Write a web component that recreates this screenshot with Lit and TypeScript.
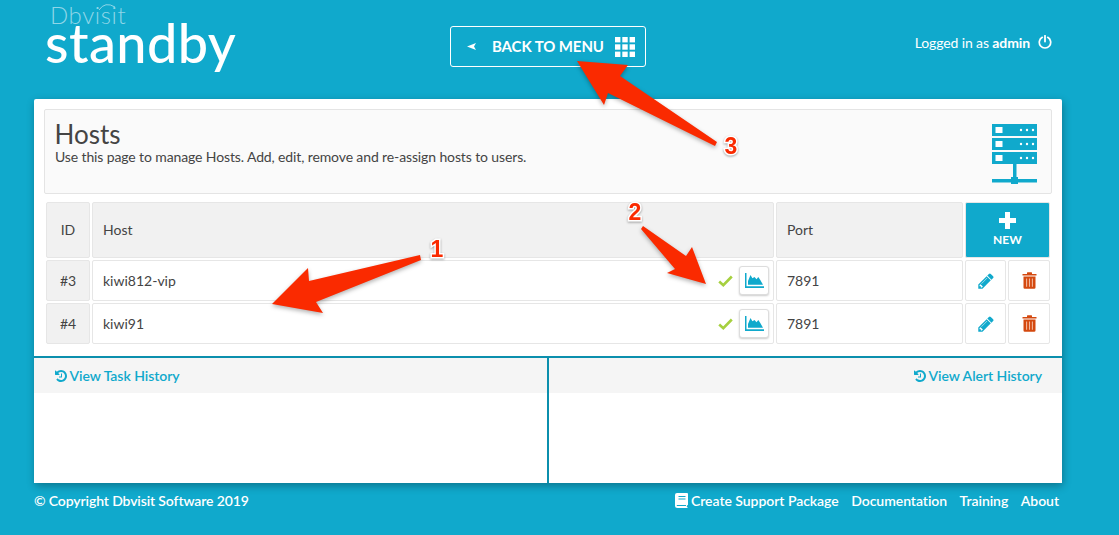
import { LitElement, html, css, svg } from "lit";
import { customElement } from "lit/decorators.js";

const historyIcon = html`<svg class="hist" viewBox="0 0 1792 1792"><path fill="currentColor" d="M1664 896q0 156-61 298t-164 245-245 164-298 61q-172 0-327-72.5t-264-204.5q-7-10-6.5-22.500t8.500-20.500l137-138q10-9 25-9 16 2 23 12 73 95 179 147t225 52q104 0 198.500-40.500t163.500-109.500 109.500-163.500 40.500-198.500-40.500-198.500-109.500-163.500-163.500-109.500-198.500-40.500q-98 0-188 35.500t-160 101.500l137 138q31 30 14 69-17 40-59 40h-448q-26 0-45-19t-19-45v-448q0-42 40-59 39-17 69 14l130 129q107-101 244.500-156.500t284.500-55.500q156 0 298 61t245 164 164 245 61 298zm-640-288v448q0 14-9 23t-23 9h-320q-14 0-23-9t-9-23v-64q0-14 9-23t23-9h224v-352q0-14 9-23t23-9h64q14 0 23 9t9 23z"/></svg>`;

const check = html`<svg class="check" viewBox="0 0 15 12"><path d="M1.200 6.500 5.300 10.200 13.800 1.500" fill="none" stroke="#a6d03f" stroke-width="2.600"/></svg>`;

const chart = html`<svg class="chart" viewBox="0 0 19 15"><path fill="#10a9cc" d="M0 0h1.500v13.300H19V15H0z"/><path fill="#10a9cc" d="M3 11.800V8L5.500 2 7.400 5.300 9.500 4 11.500 6.200 13.300 4 15.300 7 18 11.800z"/></svg>`;

const pencil = html`<svg class="pencil" viewBox="0 0 1792 1792"><path fill="#10a9cc" d="M491 1536l91-91-235-235-91 91v107h128v128h107zm523-928q0-22-22-22-10 0-17 7l-542 542q-7 7-7 17 0 22 22 22 10 0 17-7l542-542q7-7 7-17zm-54-192l416 416-832 832h-416v-416zm683 96q0 53-37 90l-166 166-416-416 166-165q36-38 90-38 53 0 91 38l235 234q37 39 37 91z"/></svg>`;

const trash = html`<svg class="trash" viewBox="0 0 15 17"><path fill="#d4490f" d="M0.500 2H5V.8Q5 .2 5.600 .2H9.400Q10 .2 10 .8V2H14.500V3.600H.500zM1.500 4.600H13.500V15.500Q13.500 16.800 12.200 16.800H2.800Q1.500 16.800 1.500 15.500z"/><path stroke="#f3b79c" stroke-width="1.100" d="M4.600 6.500V14.800M7.500 6.500V14.800M10.400 6.500V14.800"/></svg>`;

const serverIcon = html`<svg class="server" viewBox="0 0 45 60"><g fill="#10a9cc"><rect x="0" y="0" width="45" height="12"/><rect x="0" y="14" width="45" height="12"/><rect x="0" y="28" width="45" height="12"/><rect x="21" y="40" width="3.500" height="13"/><rect x="0" y="55" width="45" height="3.500"/><rect x="19" y="53" width="7" height="7"/></g><g fill="#fff"><rect x="3.500" y="3" width="7" height="6"/><rect x="3.500" y="17" width="7" height="6"/><rect x="3.500" y="31" width="7" height="6"/>${[5.5, 19.5, 33.5].map(y => [29, 35, 41].map(x => svg`<circle cx=${x} cy=${y + 0.5} r="1.200"/>`))}</g></svg>`;

const gridIcon = html`<svg class="grid-ico" viewBox="0 0 20 20" fill="#fff">${[0, 7.3, 14.6].map(y => [0, 7.3, 14.6].map(x => svg`<rect x=${x} y=${y} width="5.400" height="5.400"/>`))}</svg>`;

const power = html`<svg class="power" viewBox="0 0 14 14"><path d="M4.300 2.300A5.700 5.700 0 1 0 9.700 2.300" fill="none" stroke="#fff" stroke-width="1.700" stroke-linecap="round"/><path d="M7 .8V6.500" stroke="#fff" stroke-width="1.800" stroke-linecap="round"/></svg>`;

const book = html`<svg class="book" viewBox="0 0 13 15"><path fill="#fff" d="M2 0H12Q13 0 13 1V11.500Q13 12 12.400 12.300 11.700 12.700 11.700 13.200T12.500 14V15H2.500Q0 15 0 12.500V2Q0 0 2 0z"/><path stroke="#10a9cc" stroke-width="1" d="M3.500 3.500H10.500M3.500 6H10.500M1.800 12.500H11"/></svg>`;

@customElement("host-table")
class HostTable extends LitElement {
  static styles = css`
    :host { display: block; margin: 8px 12px 0; }
    .table { display: grid; grid-template-columns: 44px 682px 187px 41px 42px; grid-template-rows: 56px 41px 41px; gap: 2px; }
    .cell { box-sizing: border-box; border: 1px solid #e6e6e6; border-radius: 2px; display: flex; align-items: center; padding: 0 10px; font-size: 14px; color: #444; background: #fff; }
    .grey { background: #f1f1f1; }
    .head { padding-bottom: 2px; }
    .center { justify-content: center; padding-left: 0; padding-right: 0; }
    .new { grid-column: 4 / 6; background: #10a9cc; color: #fff; flex-direction: column; justify-content: center; font-weight: 700; font-size: 12px; padding: 0 0 2px; }
    .plus { position: relative; width: 17px; height: 17px; margin-bottom: 3px; }
    .plus-h { display: block; width: 17px; height: 5px; background: #fff; margin: 6px 0; }
    .plus-v { display: block; position: absolute; left: 6px; top: 0; width: 5px; height: 17px; background: #fff; }
    .host { justify-content: space-between; padding-right: 4px; }
    .status { display: flex; align-items: center; gap: 6px; }
    .check { width: 15px; height: 12px; display: block; }
    .btn { box-sizing: border-box; width: 30px; height: 29px; border: 1px solid #ddd; border-radius: 3px; display: flex; align-items: center; justify-content: center; box-shadow: 0 1px 2px rgba(0,0,0,.2); background: #fff; }
    .chart { width: 19px; height: 15px; display: block; }
    .pencil { width: 18px; height: 18px; display: block; }
    .trash { width: 15px; height: 17px; display: block; }
  `;
  row(id: string, host: string) {
    return html`
      <div class="cell grey center">${id}</div>
      <div class="cell host"><span>${host}</span><span class="status">${check}<span class="btn">${chart}</span></span></div>
      <div class="cell">7891</div>
      <div class="cell center">${pencil}</div>
      <div class="cell center">${trash}</div>`;
  }
  render() {
    return html`<div class="table">
      <div class="cell grey center head">ID</div>
      <div class="cell grey head">Host</div>
      <div class="cell grey head">Port</div>
      <div class="cell new"><span class="plus"><i class="plus-h"></i><i class="plus-v"></i></span>NEW</div>
      ${this.row("#3", "kiwi812-vip")}
      ${this.row("#4", "kiwi91")}
    </div>`;
  }
}

@customElement("app-root")
class AppRoot extends LitElement {
  static styles = css`
    :host { display: block; position: relative; width: 1119px; height: 535px; overflow: hidden; background: #10a9cc; font-family: Lato, "Open Sans", sans-serif; color: #fff; }
    .header { height: 99px; display: grid; grid-template-columns: 450px 196px 1fr; box-sizing: border-box; }
    .logo { position: relative; padding: 0 0 0 45px; display: flex; flex-direction: column; }
    .dbv { font-size: 24px; line-height: 20px; margin: 5px 0 0 5px; color: #8fd6e8; font-weight: 300; letter-spacing: .6px; }
    .standby { font-size: 54px; line-height: 46px; color: #fff; font-weight: 500; letter-spacing: .45px; margin-top: -5px; }
    .swoosh { position: absolute; left: 98px; top: 1px; width: 18px; height: 10px; }
    .back { box-sizing: border-box; height: 41px; margin-top: 26px; border: 1px solid #fff; border-radius: 3px; display: flex; align-items: center; padding: 0 10px 0 16px; font-weight: 700; font-size: 15px; letter-spacing: -.1px; }
    .back-text { margin-bottom: 2px; }
    .tri { width: 9px; height: 7px; display: block; margin-right: 16px; }
    .grid-ico { width: 20px; height: 20px; margin-left: auto; display: block; }
    .user { display: flex; justify-content: flex-end; align-items: center; gap: 8px; height: 20px; margin-top: 32px; padding-right: 67px; font-size: 14px; letter-spacing: -.12px; }
    .power { width: 14px; height: 14px; display: block; }
    .card { margin: 0 57px 0 34px; height: 384px; background: #fff; border-radius: 2px; box-shadow: 1px 3px 8px rgba(0,0,0,.3); color: #444; display: flex; flex-direction: column; }
    .intro { box-sizing: border-box; margin: 10px 10px 0; height: 85px; border: 1px solid #e4e4e4; border-radius: 2px; background: #fafafa; padding: 10px 14px 0 10px; display: flex; justify-content: space-between; }
    h1 { margin: 0 0 0 -.5px; font-size: 26px; line-height: 29px; font-weight: 400; color: #444; }
    p { margin: 0; font-size: 14px; line-height: 15px; color: #444; letter-spacing: -.12px; }
    .server { width: 45px; height: 60px; display: block; margin-top: 4px; }
    host-table { flex: none; }
    .panels { margin-top: 12px; flex: 1; display: grid; grid-template-columns: 513px 513px; column-gap: 2px; background: #0b8fad; padding-top: 2px; border-radius: 0 0 2px 2px; }
    .panel { background: #fff; }
    .panel-head { height: 35px; background: #f5f5f5; display: flex; align-items: center; padding: 0 20px 0 19.500px; font-size: 14px; font-weight: 600; letter-spacing: -.04px; color: #10a9cc; }
    .right { justify-content: flex-end; }
    .hist { width: 14px; height: 14px; display: block; margin-right: 2px; }
    .footer { margin: 9px 60px 0 34px; display: flex; align-items: center; font-size: 14px; font-weight: 600; letter-spacing: -.12px; }
    .links { margin-left: auto; display: flex; align-items: center; gap: 12.500px; letter-spacing: -.04px; }
    .sup { display: flex; align-items: center; gap: 3px; }
    .book { width: 13px; height: 15px; display: block; }
    .overlay { position: absolute; left: 0; top: 0; width: 1119px; height: 535px; pointer-events: none; }
    .shape { fill: #fa2a00; filter: drop-shadow(0 2px 2px rgba(0,0,0,.3)); }
    .num { font-family: "Liberation Sans", sans-serif; font-weight: 700; font-size: 23px; fill: #fa2a00; stroke: #fff; stroke-width: 3px; paint-order: stroke; text-anchor: middle; filter: drop-shadow(0 1px 1px rgba(0,0,0,.35)); }
  `;
  render() {
    return html`
      <div class="header">
        <div class="logo"><svg class="swoosh" viewBox="0 0 18 10"><path d="M1 9Q7 0 17 6" fill="none" stroke="#8fd6e8" stroke-width="1"/></svg><span class="dbv">Dbvisit</span><span class="standby">standby</span></div>
        <div class="back"><svg class="tri" viewBox="0 0 9 7"><path fill="#fff" d="M0 3.500 9 0 7 3.500 9 7z"/></svg><span class="back-text">BACK TO MENU</span>${gridIcon}</div>
        <div class="user"><span>Logged in as <b>admin</b></span>${power}</div>
      </div>
      <div class="card">
        <div class="intro">
          <div><h1>Hosts</h1><p>Use this page to manage Hosts. Add, edit, remove and re-assign hosts to users.</p></div>
          ${serverIcon}
        </div>
        <host-table></host-table>
        <div class="panels">
          <div class="panel"><div class="panel-head">${historyIcon}View Task History</div></div>
          <div class="panel"><div class="panel-head right">${historyIcon}View Alert History</div></div>
        </div>
      </div>
      <div class="footer">
        <span>© Copyright Dbvisit Software 2019</span>
        <span class="links"><span class="sup">${book}Create Support Package</span><span>Documentation</span><span>Training</span><span>About</span></span>
      </div>
      <svg class="overlay" viewBox="0 0 1119 535">
        <polygon class="shape" points="420,255 309,281 308,268 272,304 323,313 316,302 421,260"/>
        <polygon class="shape" points="643,226 686,256 692,247 706,284 667,273 675,269 641,229"/>
        <polygon class="shape" points="577,61 628,65 620,76 717,142 715,146 608,93 604,105"/>
        <text class="num" x="437" y="257">1</text>
        <text class="num" x="635" y="220">2</text>
        <text class="num" x="731" y="154">3</text>
      </svg>
    `;
  }
}
